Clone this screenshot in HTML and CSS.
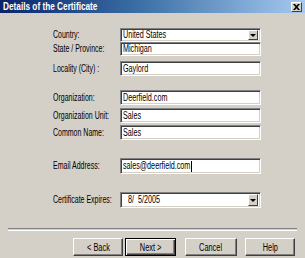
FILE: index.html
```html
<!DOCTYPE html>
<html>
<head>
<meta charset="utf-8">
<link rel="stylesheet" href="styles.css">
</head>
<body>
<div class="dialog">
  <div class="titlebar">
    <span class="title"><span class="sx">Details of the Certificate</span></span>
    <span class="close"><svg width="7" height="6" viewBox="0 0 7 6"><path d="M0 0h2l1.5 1.7L5 0h2L4.5 3 7 6H5L3.5 4.3 2 6H0l2.5-3z" fill="#000"/></svg></span>
  </div>
  <div class="form">
    <div class="row r1">
      <div class="label"><span class="sx">Country:</span></div>
      <div class="field combo"><span class="val"><span class="sf">United States</span></span><span class="arrow"><i></i></span></div>
    </div>
    <div class="row r2">
      <div class="label"><span class="sx">State / Province:</span></div>
      <div class="field"><span class="val"><span class="sf">Michigan</span></span></div>
    </div>
    <div class="row r3">
      <div class="label"><span class="sx">Locality (City) :</span></div>
      <div class="field"><span class="val"><span class="sf">Gaylord</span></span></div>
    </div>
    <div class="row r4">
      <div class="label"><span class="sx">Organization:</span></div>
      <div class="field"><span class="val"><span class="sf">Deerfield.com</span></span></div>
    </div>
    <div class="row r5">
      <div class="label"><span class="sx">Organization Unit:</span></div>
      <div class="field"><span class="val"><span class="sf">Sales</span></span></div>
    </div>
    <div class="row r6">
      <div class="label"><span class="sx">Common Name:</span></div>
      <div class="field"><span class="val"><span class="sf">Sales</span></span></div>
    </div>
    <div class="row r7">
      <div class="label"><span class="sx">Email Address:</span></div>
      <div class="field tall"><span class="val"><span class="sf">sales@deerfield.com</span><span class="caret"></span></span></div>
    </div>
    <div class="row r8">
      <div class="label"><span class="sx">Certificate Expires:</span></div>
      <div class="field combo tall"><span class="val date"><span class="sf">8/&nbsp;&nbsp;5/2005</span></span><span class="arrow"><i></i></span></div>
    </div>
  </div>
  <div class="sep"></div>
  <div class="buttons">
    <div class="btn"><span class="sb">&lt; Back</span></div>
    <div class="btn default"><span class="sb">Next &gt;</span></div>
    <div class="btn gap"><span class="sb">Cancel</span></div>
    <div class="btn"><span class="sb">Help</span></div>
  </div>
</div>
</body>
</html>
```
FILE: styles.css
```css
html, body {
  margin: 0;
  padding: 0;
  background: #d4d0c8;
}
.dialog {
  width: 305px;
  height: 258px;
  background: #d4d0c8;
  font-family: "Liberation Sans", Arial, sans-serif;
  color: #000;
  overflow: hidden;
}
.titlebar {
  height: 13px;
  background: linear-gradient(to right, #0a246a 0%, #3a6ea5 45%, #a6caf0 100%);
  display: flex;
  align-items: center;
  justify-content: space-between;
  padding: 0 3px 0 3px;
}
.title {
  color: #fff;
  font-weight: bold;
  font-size: 11px;
  line-height: 13px;
  white-space: nowrap;
}
.title .sx {
  transform: scaleX(0.75);
}
.sx, .sf, .sb {
  display: inline-block;
  transform-origin: left center;
  white-space: nowrap;
}
.close {
  width: 11px;
  height: 10px;
  background: #d4d0c8;
  border-top: 1px solid #fff;
  border-left: 1px solid #fff;
  border-right: 1px solid #404040;
  border-bottom: 1px solid #404040;
  box-sizing: border-box;
  display: flex;
  align-items: center;
  justify-content: center;
}
.form {
  padding-top: 15px;
}
.row {
  display: grid;
  grid-template-columns: 120px 141px;
  align-items: center;
}
.r2 { margin-top: 0; }
.r3 { margin-top: 5px; }
.r4 { margin-top: 14px; }
.r5 { margin-top: 3px; }
.r6 { margin-top: 2px; }
.r7 { margin-top: 18px; }
.r8 { margin-top: 18px; }
.label {
  padding-left: 53px;
  font-size: 10px;
  line-height: 12px;
}
.label .sx {
  transform: scaleX(0.7);
}
.field {
  height: 14px;
  box-sizing: border-box;
  background: #fff;
  border-top: 1px solid #808080;
  border-left: 1px solid #808080;
  border-right: 1px solid #fff;
  border-bottom: 1px solid #fff;
  box-shadow: inset 1px 1px 0 #404040, inset -1px -1px 0 #d4d0c8;
  display: flex;
  align-items: center;
  font-size: 10px;
  line-height: 12px;
}
.r3 .field, .r4 .field, .r5 .field, .r6 .field { height: 15px; }
.field.tall { height: 16px; }
.val {
  flex: 1;
  padding-left: 2px;
  display: flex;
  align-items: center;
  overflow: hidden;
}
.sf {
  transform: scaleX(0.72);
}
.val.date { padding-left: 7px; }
.caret {
  width: 1px;
  height: 11px;
  background: #000;
  margin-left: -26px;
}
.arrow {
  width: 10px;
  height: 10px;
  margin-right: 2px;
  box-sizing: border-box;
  background: #d4d0c8;
  border-top: 1px solid #fff;
  border-left: 1px solid #fff;
  border-right: 1px solid #404040;
  border-bottom: 1px solid #404040;
  display: flex;
  align-items: center;
  justify-content: center;
}
.tall .arrow { height: 12px; }
.arrow i {
  width: 0;
  height: 0;
  border-left: 3px solid transparent;
  border-right: 3px solid transparent;
  border-top: 3px solid #000;
}
.sep {
  margin: 20px 8px 0 8px;
  height: 1px;
  border-top: 1px solid #808080;
  border-bottom: 1px solid #fff;
}
.buttons {
  margin-top: 7px;
  display: flex;
  padding-left: 73px;
}
.btn {
  width: 50px;
  height: 18px;
  box-sizing: border-box;
  background: #d4d0c8;
  border-top: 1px solid #fff;
  border-left: 1px solid #fff;
  border-right: 1px solid #404040;
  border-bottom: 1px solid #404040;
  box-shadow: inset -1px -1px 0 #808080;
  display: flex;
  align-items: center;
  justify-content: center;
  font-size: 10px;
  margin-right: 2px;
}
.btn.default {
  width: 51px;
  border: 1px solid #000;
  box-shadow: inset 1px 1px 0 #fff, inset -1px -1px 0 #404040, inset -2px -2px 0 #808080;
}
.btn.gap {
  margin-left: 7px;
  margin-right: 8px;
  width: 52px;
}
.sb {
  transform: scaleX(0.74);
  transform-origin: center center;
}
```
